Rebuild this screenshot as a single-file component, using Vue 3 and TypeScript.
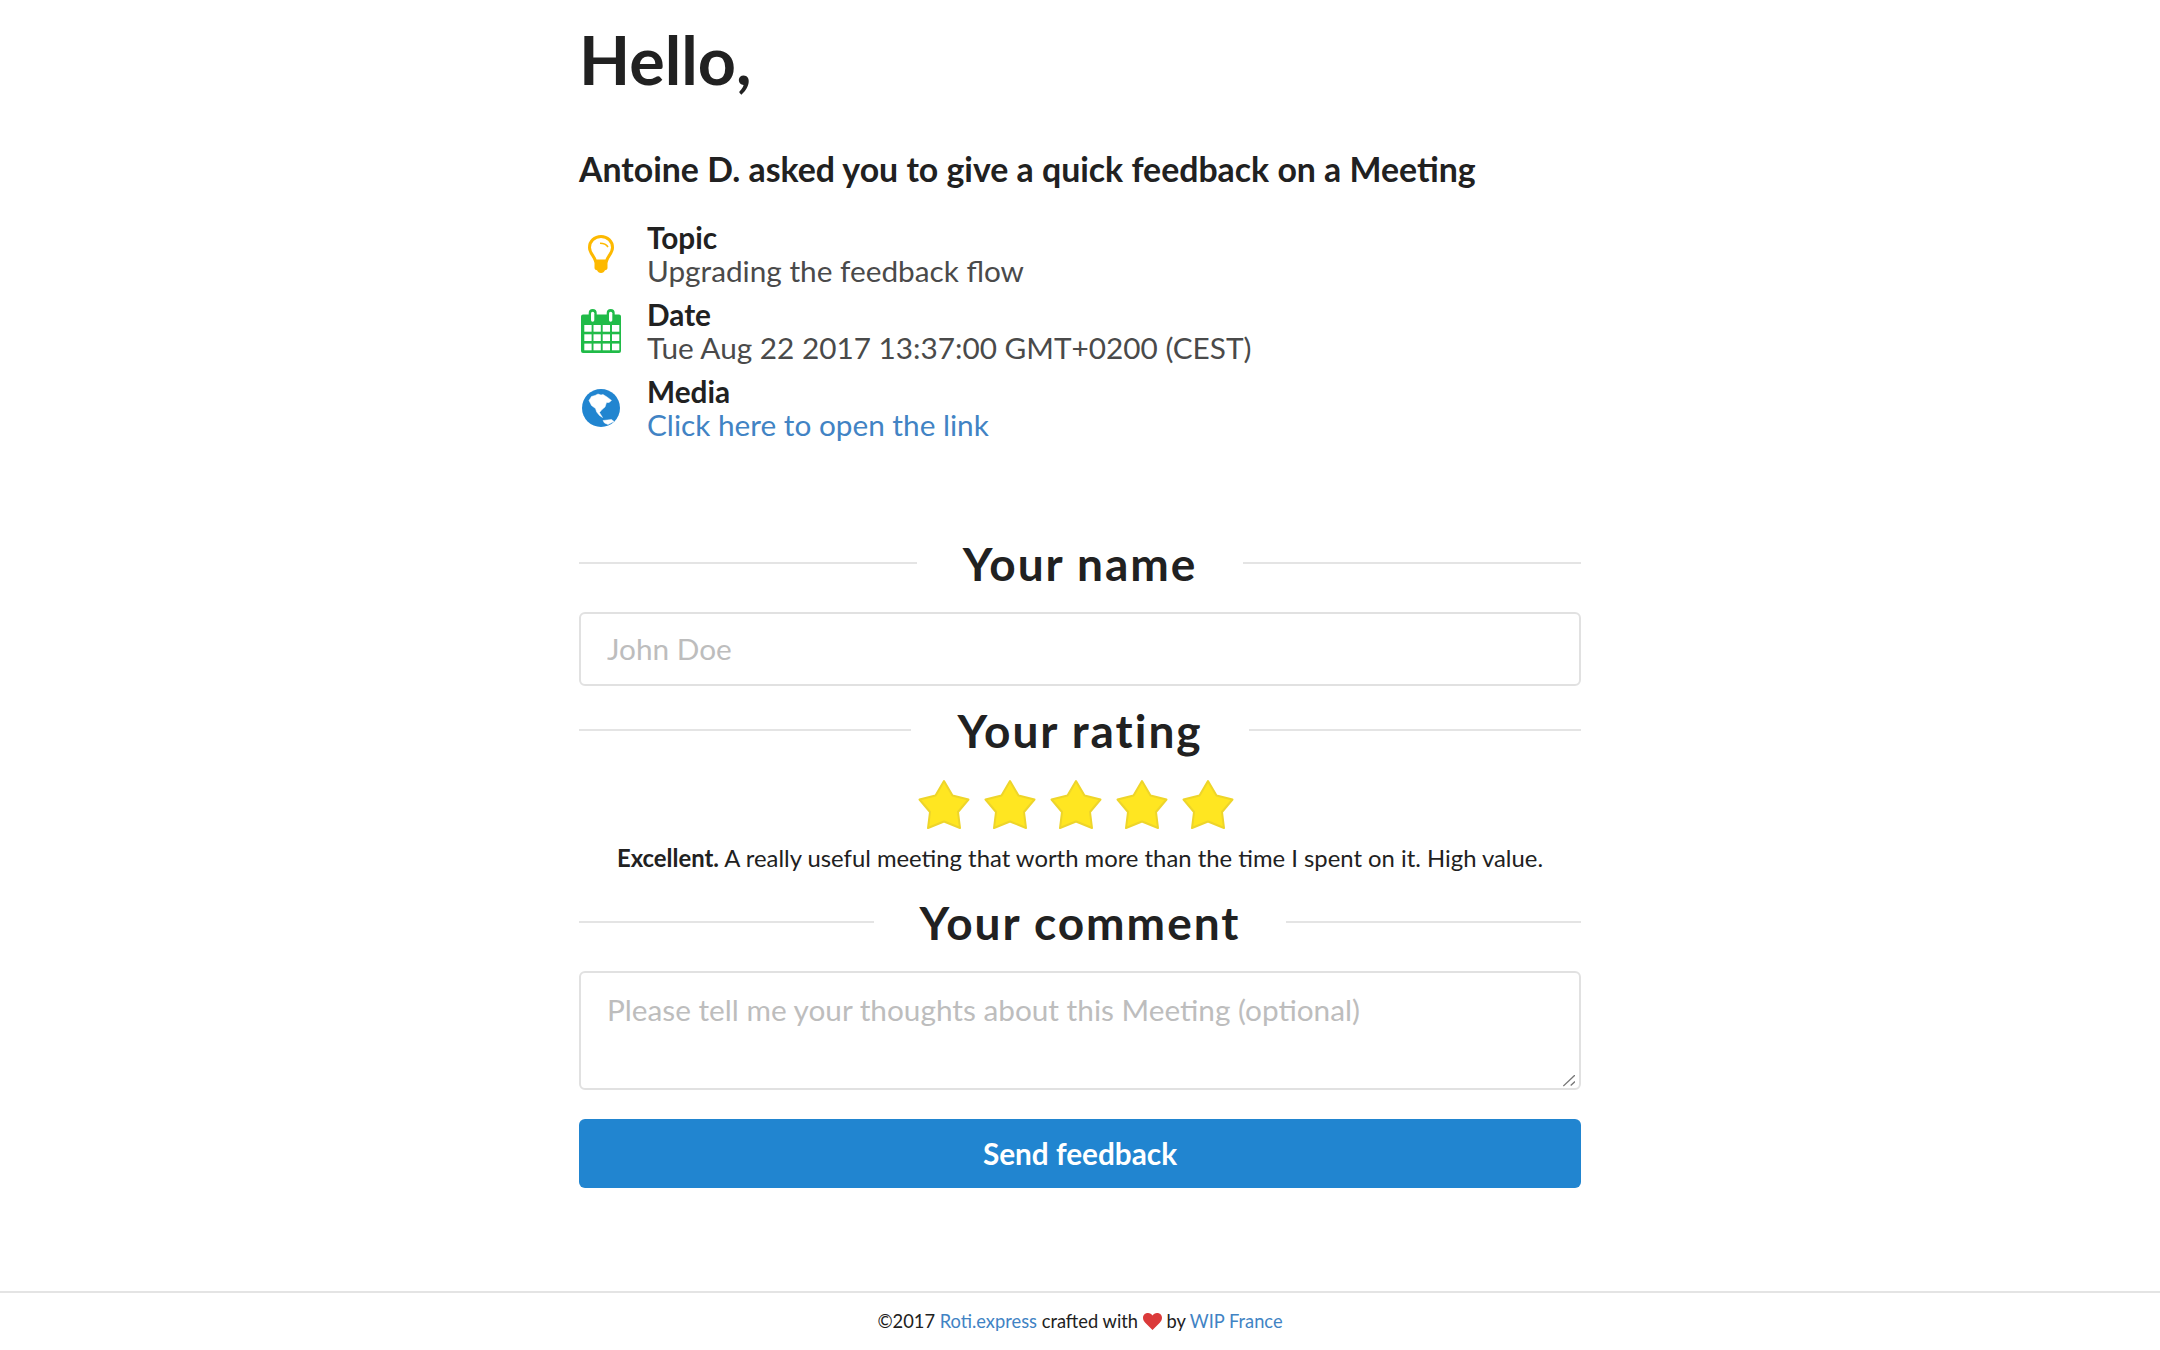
<script setup lang="ts">
const infos = [
  { icon: 'bulb', label: 'Topic', value: 'Upgrading the feedback flow' },
  { icon: 'calendar', label: 'Date', value: 'Tue Aug 22 2017 13:37:00 GMT+0200 (CEST)' },
  { icon: 'globe', label: 'Media', value: 'Click here to open the link', link: true },
]
const stars = [1, 2, 3, 4, 5]
</script>

<template>
  <div class="page">
    <main class="content">
      <h1>Hello,</h1>
      <h2>Antoine D. asked you to give a quick feedback on a Meeting</h2>

      <div class="infos">
        <div v-for="info in infos" :key="info.label" class="info">
          <div class="icon">
            <svg v-if="info.icon === 'bulb'" width="26" height="38" viewBox="0 0 26 38">
              <path d="M13 1.5C6.500 1.500 1.500 6.300 1.500 12.500c0 5.500 4.300 8 6 13.500h11c1.700-5.500 6-8 6-13.500C24.500 6.300 19.500 1.500 13 1.500z" fill="none" stroke="#fdb900" stroke-width="3" />
              <path d="M6.500 25h13v8c0 1.300-1 2-2.500 2.200-.7 1.600-2 2.800-4 2.800s-3.300-1.200-4-2.800C7.500 35 6.500 34.300 6.500 33z" fill="#fdb900" />
              <path d="M12 8.300c3.500 0 6.500 1.300 8 3.700" fill="none" stroke="#fdb900" stroke-width="1.500" />
            </svg>
            <svg v-else-if="info.icon === 'calendar'" width="40" height="44" viewBox="0 0 40 44">
              <path d="M2 5.500h5.700V4a4 4 0 0 1 8 0v1.500h10V4a4 4 0 0 1 8 0v1.500H38a2 2 0 0 1 2 2V42a2 2 0 0 1-2 2H2a2 2 0 0 1-2-2V7.500a2 2 0 0 1 2-2z" fill="#20bb48" />
              <rect x="10" y="2.700" width="3.300" height="10" rx="1.600" fill="#fff" />
              <rect x="28" y="2.700" width="3.300" height="10" rx="1.600" fill="#fff" />
              <g fill="#fff">
                <template v-for="y in [16, 25.300, 34.600]" :key="y">
                  <rect v-for="x in [3.300, 12.500, 21.700, 31]" :key="x" :x="x" :y="y" width="7.300" height="6.700" />
                </template>
              </g>
            </svg>
            <svg v-else width="38" height="38" viewBox="0 0 38 38">
              <circle cx="19" cy="19" r="19" fill="#2185d0" />
              <path d="M16 5L19 6 21 5.500 25 8 29.500 11.400 27 13.500 24.500 13.500 23 18 20 20.500 17.500 23.500 20.500 28.500 17.500 26.500 14.700 23 13.500 19.500 9.500 16.500 7 11.500 9.500 7.500 13 6.500z" fill="#fff" stroke="#fff" stroke-width=".5" stroke-linejoin="round" />
              <path d="M21 31.500L29.500 30.500 32 32.500 26 35.500 22.500 34z" fill="#fff" stroke="#fff" stroke-width=".5" stroke-linejoin="round" />
            </svg>
          </div>
          <div class="info-text">
            <div class="info-label">{{ info.label }}</div>
            <a v-if="info.link" class="info-value link" href="#">{{ info.value }}</a>
            <div v-else class="info-value">{{ info.value }}</div>
          </div>
        </div>
      </div>

      <div class="divider first"><span>Your name</span></div>
      <input class="field" type="text" placeholder="John Doe" />

      <div class="divider rating"><span>Your rating</span></div>
      <div class="stars">
        <svg v-for="s in stars" :key="s" width="52" height="50" viewBox="0 0 52 50">
          <path d="M26 2L34.500 16.500 50.500 20.500 40 33 42 49 26 42.500 10 49 12 33 1.500 20.500 17.500 16.500z" fill="#ffe621" stroke="#eed52a" stroke-width="2" stroke-linejoin="round" />
        </svg>
      </div>
      <p class="rating-text"><b>Excellent.</b> A really useful meeting that worth more than the time I spent on it. High value.</p>

      <div class="divider comment"><span>Your comment</span></div>
      <div class="area-wrap">
        <textarea class="field area" placeholder="Please tell me your thoughts about this Meeting (optional)"></textarea>
        <svg class="grip" width="12" height="12" viewBox="0 0 12 12">
          <path d="M.3 11L12 0M7.700 10.500L12 6.500" fill="none" stroke="#777" stroke-width="1.300" />
        </svg>
      </div>

      <button class="send" type="button">Send feedback</button>
    </main>

    <footer class="footer">
      ©2017 <a href="#">Roti.express</a> crafted with
      <svg width="19" height="17" viewBox="0 0 19 17"><path d="M9.500 17L2 9.500C-1.500 6-.3 0 5 0 7 0 8.500 1 9.500 2.500 10.500 1 12 0 14 0c5.300 0 6.500 6 3 9.500z" fill="#db3a3a" /></svg>
      by <a href="#">WIP France</a>
    </footer>
  </div>
</template>

<style>
html, body { margin: 0; background: #fff; }
</style>

<style scoped>
.page {
  font-family: Lato, "Open Sans", sans-serif;
  color: #212121;
  height: 1350px;
  overflow: hidden;
}
.content {
  width: 1002px;
  margin: 0 auto;
}
h1 {
  margin: 0;
  padding-top: 21px;
  font-size: 66.5px;
  line-height: 76px;
  font-weight: 700;
}
h2 {
  margin: 51px 0 0;
  font-size: 33.85px;
  line-height: 42px;
  font-weight: 700;
}
.infos {
  margin-top: 30px;
  display: flex;
  flex-direction: column;
  gap: 10px;
}
.info {
  display: flex;
  align-items: center;
  height: 67px;
}
.icon {
  width: 44px;
  margin-right: 24px;
  display: flex;
  justify-content: center;
}
.info-text {
  font-size: 29.75px;
  line-height: 33px;
}
.info-label {
  font-weight: 700;
}
.info-value {
  display: block;
  color: #4a4a4a;
}
.link {
  color: #4183c4;
  text-decoration: none;
}
.divider {
  display: flex;
  align-items: center;
  font-size: 46px;
  line-height: 56px;
  font-weight: 700;
  letter-spacing: 2px;
  gap: 46px;
}
.divider::before,
.divider::after {
  content: "";
  flex: 1;
  height: 2px;
  margin-top: -3px;
  background: #e4e4e4;
}
.divider.first { margin-top: 95px; }
.divider.rating { margin-top: 17px; }
.divider.comment { margin-top: 20px; }
.field {
  display: block;
  box-sizing: border-box;
  width: 100%;
  height: 74px;
  margin-top: 20px;
  padding: 0 26px 2px;
  border: 2px solid #e1e1e1;
  border-radius: 6px;
  font-family: inherit;
  font-size: 29.75px;
  color: #212121;
  outline: none;
}
.field::placeholder { color: #bdbdbd; opacity: 1; }
.area-wrap {
  position: relative;
  margin-top: 20px;
}
.area {
  height: 119px;
  margin-top: 0;
  padding: 19px 26px;
  line-height: 36px;
  resize: none;
}
.grip {
  position: absolute;
  right: 6px;
  bottom: 3px;
}
.stars {
  display: flex;
  justify-content: center;
  gap: 14px;
  margin-top: 20px;
  padding-right: 8px;
}
.stars svg {
  display: block;
  overflow: visible;
}
.rating-text {
  margin: 12px 0 0;
  text-align: center;
  font-size: 23.85px;
  line-height: 34px;
}
.send {
  display: block;
  width: 100%;
  height: 69px;
  margin-top: 29px;
  border: 0;
  border-radius: 6px;
  background: #2185d0;
  color: #fff;
  font-family: inherit;
  font-size: 29.75px;
  font-weight: 700;
}
.footer {
  position: absolute;
  left: 0;
  right: 0;
  top: 1291px;
  box-sizing: border-box;
  height: 59px;
  border-top: 2px solid #e4e4e4;
  text-align: center;
  font-size: 18.3px;
  line-height: 56px;
}
.footer a {
  color: #4183c4;
  text-decoration: none;
}
.footer svg { vertical-align: -2px; }
</style>
